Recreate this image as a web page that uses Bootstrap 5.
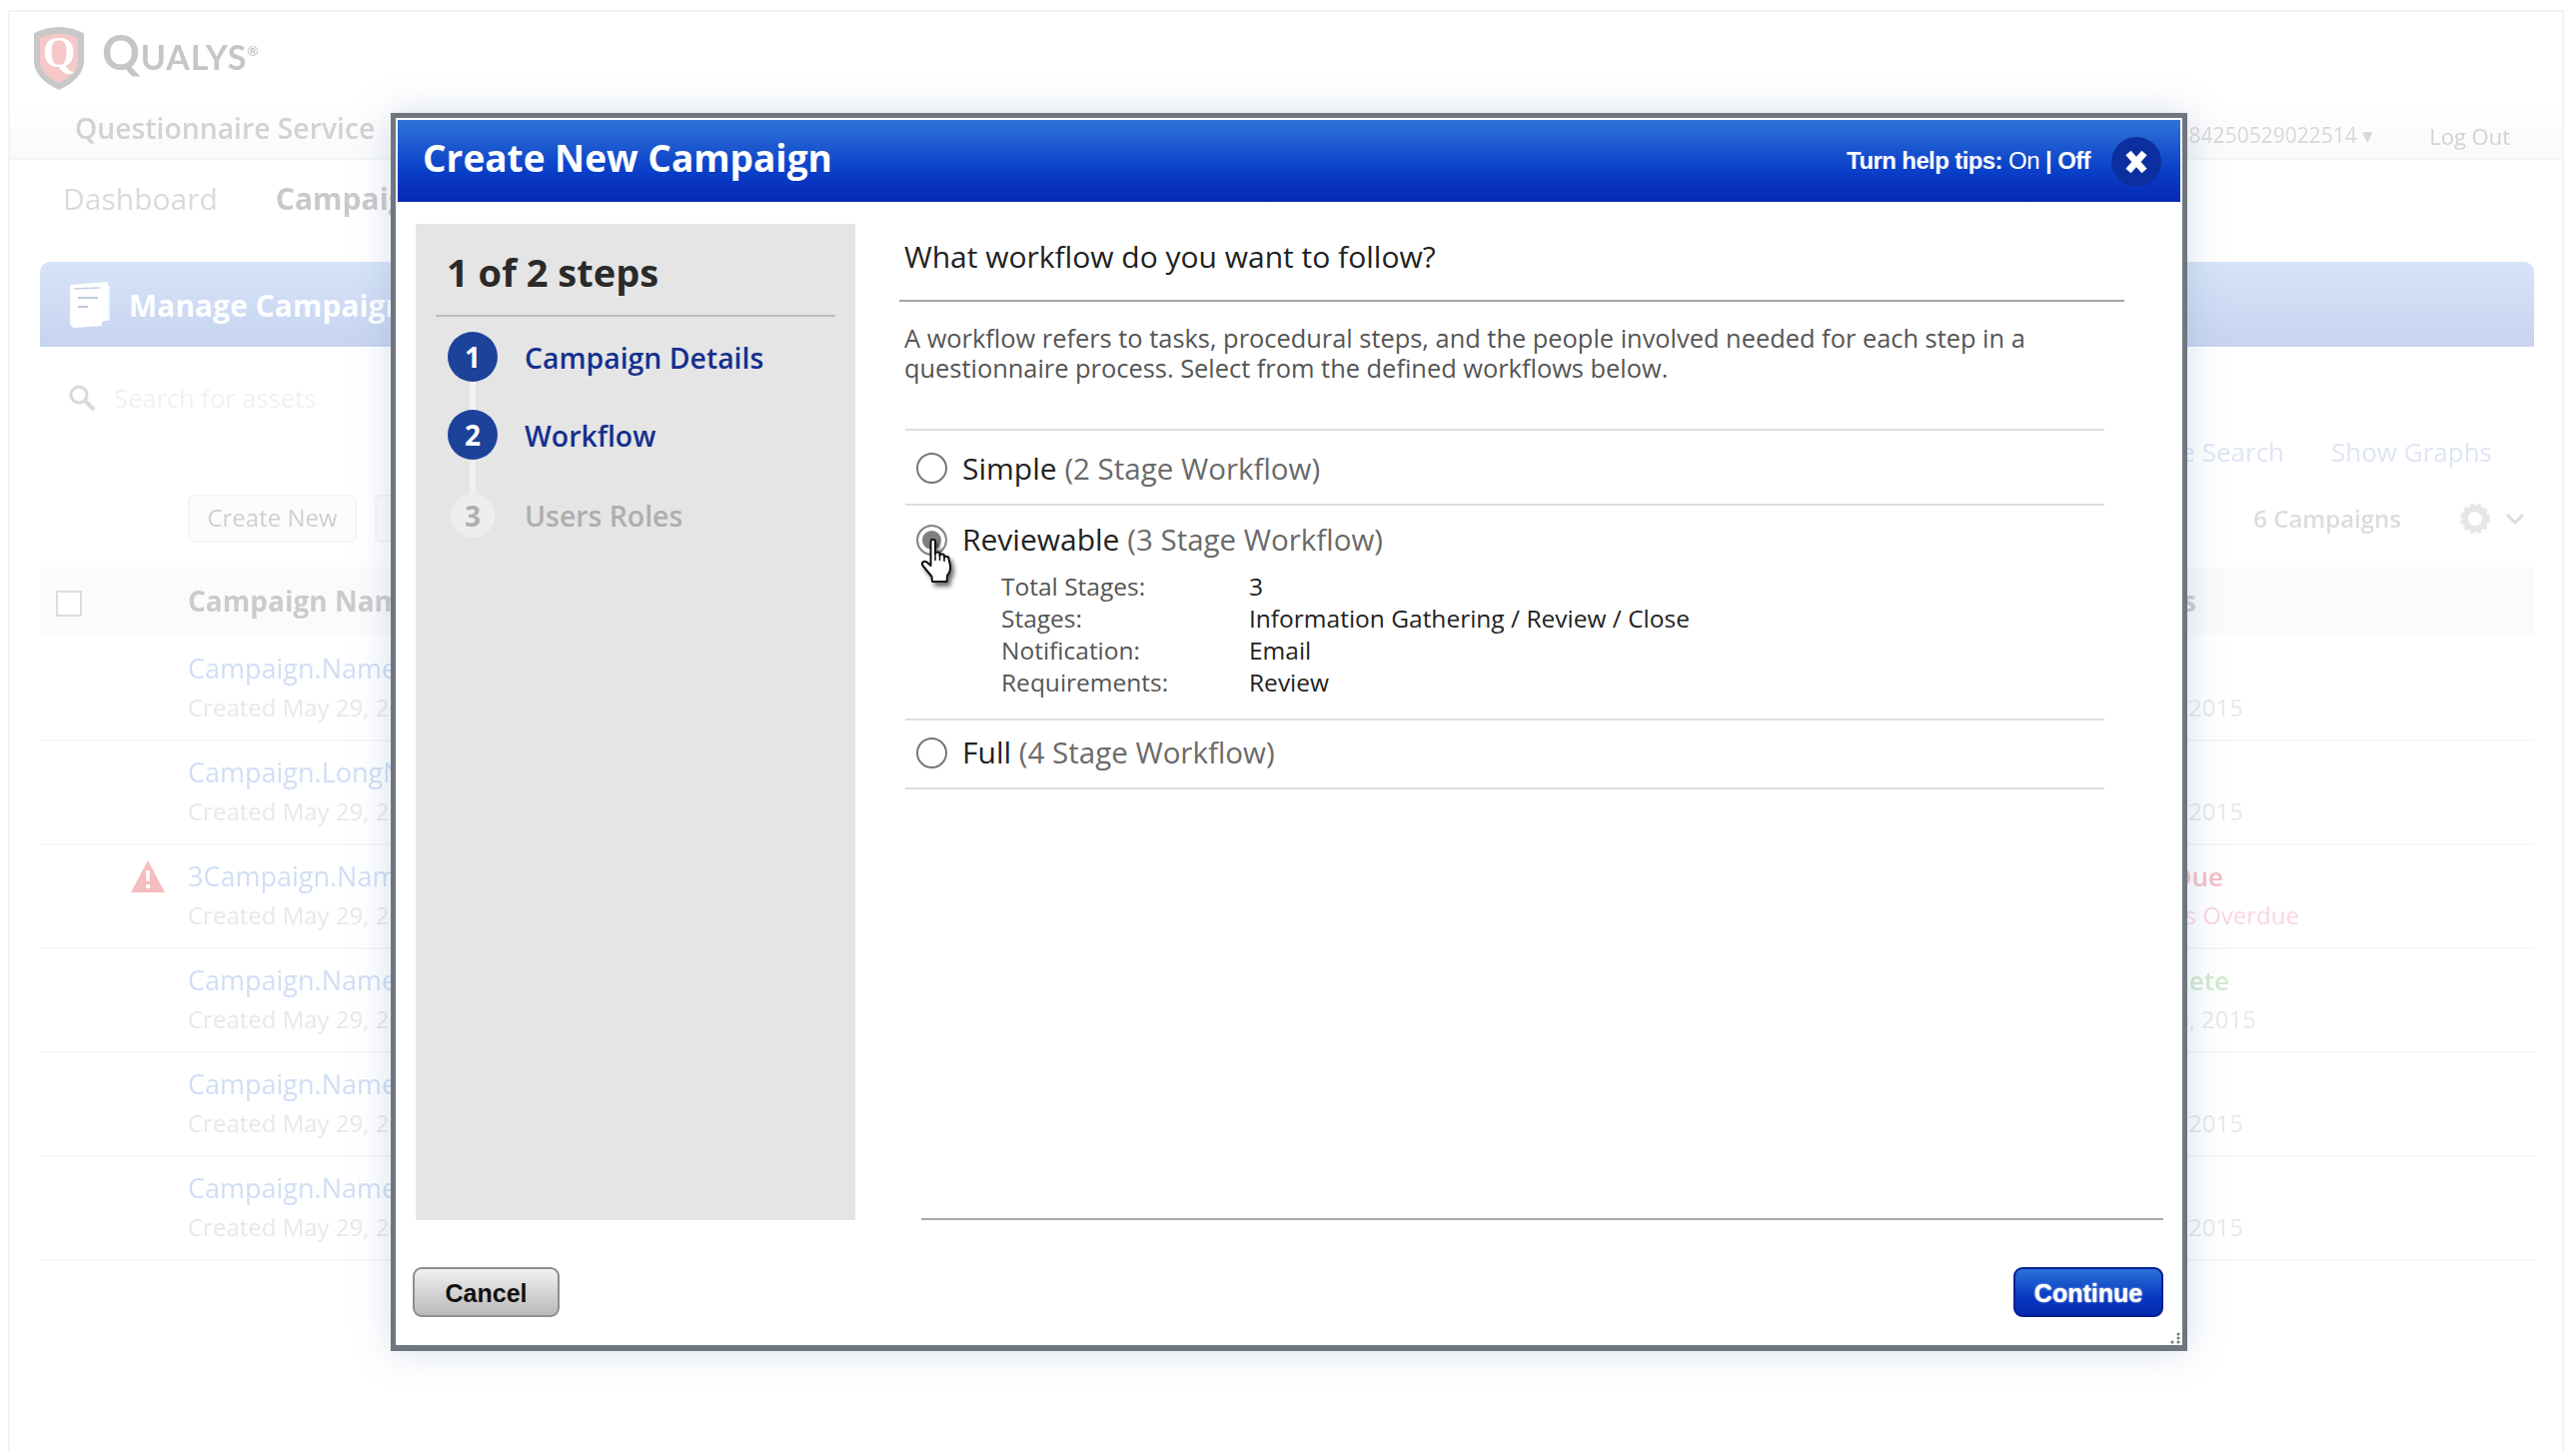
<!DOCTYPE html>
<html lang="en">
<head>
<meta charset="utf-8">
<title>Create New Campaign</title>
<link href="https://cdn.jsdelivr.net/npm/bootstrap@5.3.0/dist/css/bootstrap.min.css" rel="stylesheet">
<style>
html,body{height:1452px;overflow:hidden;background:#fff}
body{font-family:"Open Sans","Noto Sans",sans-serif;color:#222;position:relative}
/* dimmed application behind the dialog */
.qb-frame{margin:10px 12px 0 8px;height:1442px;border:2px solid #f3f3f3;border-bottom:0;filter:blur(.6px)}
.qb-logo{height:88px;padding:13px 0 0 21px;gap:15px}
.qb-word{font-family:Lato,"Open Sans",sans-serif;font-weight:700;font-size:34px;line-height:52px;color:#c6c6c6;letter-spacing:.8px;margin-top:1px}
.qb-word b{font-weight:700;font-size:47px}
.qb-word sup{font-size:14px;top:-1em}
.qb-service{height:60px;background:linear-gradient(#fff,#fafafa);border-bottom:2px solid #f4f4f4;padding:0 52px 0 65px}
.qb-service-name{font-size:28.3px;font-weight:600;color:#d2d2d2;margin-top:-2px}
.qb-acct{font-size:21px;color:#d8d8d8;padding-top:14px}
.qb-logout{font-size:22px;color:#d2d2d2;padding-top:14px}
.qb-tabs{height:76px;padding-left:53px;gap:58px;font-size:30px;color:#dadada}
.qb-tabs b{color:#c9c9c9;font-weight:700}
.qb-panel{padding:26px 28px 0 30px}
.qb-banner{height:85px;border-radius:10px 10px 0 0;background:linear-gradient(#d6e4f8,#c7d4f0);padding-left:30px;gap:17px;color:#fff;font-size:30px;font-weight:700}
.qb-banner span{padding-top:2px}
.qb-search{height:60px;margin-top:21px;padding-left:28px;gap:18px;font-size:25.5px;color:#f1f1f1}
.qb-links{height:40px;margin-top:4px;padding-right:42px;gap:47px;font-size:26px;color:#dfe4f6}
.qb-tools{height:48px;margin-top:23px;padding-left:148px;gap:18px}
.qb-tool{height:48px;border:2px solid #f5f5f5;border-radius:6px;background:#fcfcfc;color:#cfcfcf;font-size:24px;line-height:42px;padding:0;width:169px;text-align:center;white-space:nowrap}
.qb-tool-b{width:60px}
.qb-count{font-size:24px;font-weight:600;color:#dcdcdc;padding-right:9px;gap:59px}
.qb-head{height:68px;margin:24px 0 3px;background:#fbfbfb;font-size:28px;font-weight:700;color:#cbcbcb}
.qb-check{width:26px;height:26px;margin:5px 106px 0 16px;border:2px solid #dcdcdc;background:#fff}
.qb-row{height:104px;border-bottom:2px solid #f6f6f6}
.qb-slot{width:148px;flex:none;padding:14px 0 0 90px}
.qb-name{flex:1;min-width:0;white-space:nowrap;overflow:hidden;padding-top:14px}
.qb-name a,.qb-name span{display:block}
.qb-link{font-size:27px;line-height:34px;color:#cfdef6;text-decoration:none}
.qb-date{font-size:24px;line-height:34px;margin-top:5px;color:#e8e8e8}
.qb-state{width:600px;flex:none;text-align:right;padding-top:14px;white-space:nowrap}
.qb-state-top{font-size:26px;line-height:34px;font-weight:600;height:34px}
.qb-state-sub{font-size:24px;line-height:34px;margin-top:5px;color:#e8e8e8}
.qb-m291{margin-right:291px}
.qb-due{color:#f6bcc6;margin-right:311px}
.qb-over{color:#fbd6dd;margin-right:235px}
.qb-done{color:#d2eacd;margin-right:305px}
.qb-doned{margin-right:278px}
.qb-hstate{text-align:right;flex:1;padding-right:338px}
/* dialog */
.qm-box{position:absolute;left:391px;top:113px;width:1798px;height:1239px;border:solid #6e7680;border-width:5px 5px 6px 5px;padding:2px;background:#fff;box-shadow:0 0 36px rgba(120,150,190,.3)}
.qm-head{height:82px;background:linear-gradient(#2f74d6,#0a3fc8 62%,#0528b4);color:#fff;padding:0 19px 0 25px}
.qm-title{font-size:37px;font-weight:700;line-height:1;margin-top:-8px}
.qm-help{font-family:"Liberation Sans",Arial,sans-serif;font-weight:700;font-size:24px;letter-spacing:-.6px;gap:6px}
.qm-help span{font-weight:400}
.qm-close{width:50px;height:50px;border-radius:50%;background:#0c2f9f;border:0;padding:0;margin:2px 0 0 21px}
.qm-body{margin-top:22px;padding-left:18px;height:997px}
.qm-side{width:440px;flex:none;background:#e5e5e5;padding:0 20px 0 20px}
.qm-count{height:93px;border-bottom:2px solid #bcbcbc;padding:4px 0 0 11px;font-size:38px;font-weight:700;line-height:1;color:#2a2a2a}
.qm-steps{padding:15px 0 0 12px}
.qm-step{gap:27px;height:50px;font-size:28.4px;font-weight:600;color:#14308f}
.qm-step>span:last-child{padding-top:3px}
.qm-dot{width:50px;height:50px;border-radius:50%;background:#1d429a;color:#fff;font-weight:700;font-size:28px;flex:none}
.qm-link{width:6px;height:28px;margin-left:22px;background:#f3f3f3}
.qm-link-long{height:34px;opacity:.75}
.qm-step-off{color:#aeaeae;height:44px;gap:30px;margin-left:3px}
.qm-step-off>span:last-child{padding-top:0}
.qm-step-off .qm-dot{width:44px;height:44px;background:#eeeeee;color:#aeaeae}
.qm-main{flex:1;min-width:0;margin-left:44px;margin-right:17px}
.qm-q{font-size:30px;line-height:40px;padding:13px 0 0 5px;color:#222}
.qm-rule{height:2px;margin:23px 39px 0 0;background:#a4a4a4}
.qm-para{font-size:25.4px;line-height:30px;margin:21px 0 0 5px;color:#555}
.qm-opts{margin:46px 59px 0 6px;border-top:2px solid #dedede}
.qm-opt{border-bottom:2px solid #dedede}
.qm-line{gap:15px;height:73px;padding:2px 0 0 11px;font-size:30px;color:#222;margin:0}
.qm-line-open{height:65px;padding-top:3px}
.qm-opt-last .qm-line{height:67px;padding:0 0 3px 11px}
.qm-line small{font-size:29.5px;color:#6a6a6a}
.qm-radio{width:31px;height:31px;margin:0;flex:none;border:2px solid #777;background:#fff;box-shadow:none}
.qm-radio:checked{background:#808080;border:2px solid #888;box-shadow:inset 0 0 0 4px #fff;background-image:none}
.qm-detail{padding:0 0 20px 96px;font-size:24.5px;line-height:32px}
.qm-detail-row{display:flex}
.qm-detail-k{width:248px;color:#555}
.qm-detail-v{color:#222}
.qm-bottom{height:2px;margin:auto 0 0 22px;background:#a8a8a8}
.qm-foot{margin-top:47px;padding:0 17px 0 15px}
.qm-btn{height:50px;border-radius:9px;font-family:"Liberation Sans",Arial,sans-serif;font-weight:700;font-size:25px;padding:2px 0 0;line-height:1}
.qm-cancel{width:147px;color:#111;border:2px solid #8e8e8e;background:linear-gradient(#f1f1f1,#b9b9b9)}
.qm-continue{width:150px;color:#fff;border:2px solid #04208f;background:linear-gradient(#2b72d8,#0536c0 65%,#0429ad);text-shadow:0 0 2px #fff}
.qm-hand{position:absolute;left:524px;top:421px;width:36px;height:46px;filter:drop-shadow(3px 4px 2px rgba(0,0,0,.55))}
.qm-grip{position:absolute;right:1px;bottom:1px}
</style>
</head>
<body>
<div class="qb-frame">
  <div class="qb-logo d-flex align-items-start">
    <svg width="56" height="66" viewBox="0 0 56 64" preserveAspectRatio="none" aria-hidden="true"><path d="M3 8 Q28 -4 53 8 V36 Q52 52 28 63 Q4 52 3 36Z" fill="#c8c8c8"/><path d="M9 13 Q28 4 47 13 V36 Q46 48 28 56 Q10 48 9 36Z" fill="#f6c8c8"/><text x="28" y="41" text-anchor="middle" font-family="Liberation Serif,serif" font-weight="700" font-size="42" fill="#fff">Q</text></svg>
    <div class="qb-word"><b>Q</b>UALYS<sup>®</sup></div>
  </div>
  <div class="qb-service d-flex align-items-center justify-content-between">
    <div class="qb-service-name">Questionnaire Service</div>
    <div class="d-flex align-items-center" style="gap:56px"><span class="qb-acct">84250529022514 ▾</span><span class="qb-logout">Log Out</span></div>
  </div>
  <div class="qb-tabs d-flex align-items-center"><span>Dashboard</span><b>Campaigns</b></div>
  <div class="qb-panel">
    <div class="qb-banner d-flex align-items-center">
      <svg width="42" height="46" viewBox="0 0 42 46" aria-hidden="true"><path d="M0 3 L38 0 V38 L32 40 V44 L4 46 Q0 44 0 40Z" fill="#fff"/><path d="M34 4 H40 V39 H34Z" fill="#fff" opacity=".7"/><path d="M4 7 L30 6" stroke="#c5cfe6" stroke-width="1.5"/><path d="M8 16 H28 M8 25 H18" stroke="#bcc8e2" stroke-width="2"/></svg>
      <span>Manage Campaigns</span>
    </div>
    <div class="qb-search d-flex align-items-center">
      <svg width="28" height="28" viewBox="0 0 28 28" aria-hidden="true"><circle cx="11" cy="11" r="8" fill="none" stroke="#d9d9d9" stroke-width="3"/><path d="M17 17 L26 26" stroke="#d9d9d9" stroke-width="4"/></svg>
      <span>Search for assets</span>
    </div>
    <div class="qb-links d-flex align-items-center justify-content-end"><span>Save Search</span><span>Show Graphs</span></div>
    <div class="qb-tools d-flex align-items-center">
      <div class="qb-tool">Create New</div>
      <div class="qb-tool qb-tool-b"></div>
      <div class="qb-count ms-auto d-flex align-items-center"><span>6 Campaigns</span>
        <span class="d-flex align-items-center" style="gap:15px">
          <svg width="30" height="30" viewBox="0 0 30 30" aria-hidden="true"><circle cx="15" cy="15" r="10" fill="none" stroke="#e6e6e6" stroke-width="6"/><circle cx="15" cy="15" r="13" fill="none" stroke="#e6e6e6" stroke-width="4" stroke-dasharray="4 3"/></svg>
          <svg width="20" height="14" viewBox="0 0 20 14" aria-hidden="true"><path d="M2 3 L10 11 L18 3" fill="none" stroke="#dcdcdc" stroke-width="3"/></svg>
        </span>
      </div>
    </div>
    <div class="qb-head d-flex align-items-center"><div class="qb-check flex-none"></div><span>Campaign Name</span><span class="qb-hstate">Status</span></div>

    <div class="qb-row d-flex"><div class="qb-slot"></div><div class="qb-name"><a class="qb-link">Campaign.Name</a><span class="qb-date">Created May 29, 2015</span></div><div class="qb-state"><div class="qb-state-top"></div><div class="qb-state-sub qb-m291">May 29, 2015</div></div></div>
    <div class="qb-row d-flex"><div class="qb-slot"></div><div class="qb-name"><a class="qb-link">Campaign.LongName</a><span class="qb-date">Created May 29, 2015</span></div><div class="qb-state"><div class="qb-state-top"></div><div class="qb-state-sub qb-m291">May 29, 2015</div></div></div>
    <div class="qb-row d-flex"><div class="qb-slot"><svg width="36" height="34" viewBox="0 0 36 34" aria-hidden="true"><path d="M18 1 L35 33 H1Z" fill="#f5bdbd"/><path d="M16 11 H20 L19.5 22 H16.5Z M16 25 H20 V29 H16Z" fill="#fff"/></svg></div><div class="qb-name"><a class="qb-link">3Campaign.Name</a><span class="qb-date">Created May 29, 2015</span></div><div class="qb-state"><div class="qb-state-top qb-due">Due</div><div class="qb-state-sub qb-over">2 Days Overdue</div></div></div>
    <div class="qb-row d-flex"><div class="qb-slot"></div><div class="qb-name"><a class="qb-link">Campaign.Name</a><span class="qb-date">Created May 29, 2015</span></div><div class="qb-state"><div class="qb-state-top qb-done">Complete</div><div class="qb-state-sub qb-doned">May 29, 2015</div></div></div>
    <div class="qb-row d-flex"><div class="qb-slot"></div><div class="qb-name"><a class="qb-link">Campaign.Name</a><span class="qb-date">Created May 29, 2015</span></div><div class="qb-state"><div class="qb-state-top"></div><div class="qb-state-sub qb-m291">May 29, 2015</div></div></div>
    <div class="qb-row d-flex"><div class="qb-slot"></div><div class="qb-name"><a class="qb-link">Campaign.Name</a><span class="qb-date">Created May 29, 2015</span></div><div class="qb-state"><div class="qb-state-top"></div><div class="qb-state-sub qb-m291">May 29, 2015</div></div></div>
  </div>
</div>

<div class="qm-box d-flex flex-column" role="dialog" aria-label="Create New Campaign">
  <div class="qm-head d-flex align-items-center justify-content-between">
    <div class="qm-title">Create New Campaign</div>
    <div class="d-flex align-items-center">
      <div class="qm-help d-flex"><div>Turn help tips: <span>On</span> | Off</div></div>
      <button class="qm-close d-flex align-items-center justify-content-center" aria-label="Close"><svg width="24" height="24" viewBox="0 0 24 24"><path d="M4 3 L20 21 M20 3 L4 21" stroke="#fff" stroke-width="7"/></svg></button>
    </div>
  </div>
  <div class="qm-body d-flex">
    <div class="qm-side">
      <div class="qm-count d-flex align-items-center">1 of 2 steps</div>
      <div class="qm-steps">
        <div class="qm-step d-flex align-items-center"><span class="qm-dot d-flex align-items-center justify-content-center">1</span><span>Campaign Details</span></div>
        <div class="qm-link"></div>
        <div class="qm-step d-flex align-items-center"><span class="qm-dot d-flex align-items-center justify-content-center">2</span><span>Workflow</span></div>
        <div class="qm-link qm-link-long"></div>
        <div class="qm-step qm-step-off d-flex align-items-center"><span class="qm-dot d-flex align-items-center justify-content-center">3</span><span>Users Roles</span></div>
      </div>
    </div>
    <div class="qm-main d-flex flex-column">
      <div class="qm-q">What workflow do you want to follow?</div>
      <div class="qm-rule"></div>
      <p class="qm-para mb-0">A workflow refers to tasks, procedural steps, and the people involved needed for each step in a<br>questionnaire process. Select from the defined workflows below.</p>
      <div class="qm-opts">
        <div class="qm-opt">
          <label class="qm-line d-flex align-items-center"><input class="form-check-input qm-radio" type="radio" name="wf"><span>Simple <small>(2 Stage Workflow)</small></span></label>
        </div>
        <div class="qm-opt">
          <label class="qm-line qm-line-open d-flex align-items-center"><input class="form-check-input qm-radio" type="radio" name="wf" checked><span>Reviewable <small>(3 Stage Workflow)</small></span></label>
          <div class="qm-detail">
            <div class="qm-detail-row"><span class="qm-detail-k">Total Stages:</span><span class="qm-detail-v">3</span></div>
            <div class="qm-detail-row"><span class="qm-detail-k">Stages:</span><span class="qm-detail-v">Information Gathering / Review / Close</span></div>
            <div class="qm-detail-row"><span class="qm-detail-k">Notification:</span><span class="qm-detail-v">Email</span></div>
            <div class="qm-detail-row"><span class="qm-detail-k">Requirements:</span><span class="qm-detail-v">Review</span></div>
          </div>
        </div>
        <div class="qm-opt qm-opt-last">
          <label class="qm-line d-flex align-items-center"><input class="form-check-input qm-radio" type="radio" name="wf"><span>Full <small>(4 Stage Workflow)</small></span></label>
        </div>
      </div>
      <div class="qm-bottom"></div>
    </div>
  </div>
  <div class="qm-foot d-flex justify-content-between">
    <button class="btn qm-btn qm-cancel">Cancel</button>
    <button class="btn qm-btn qm-continue">Continue</button>
  </div>
  <svg class="qm-hand" viewBox="0 0 36 46" aria-hidden="true"><path d="M11.5 3 C11.5 0 16 0 16 3 V15 C16.5 13 20.5 13 20.5 15.5 V17 C21 15 25 15 25 17.5 V19 C25.5 17 29.5 17.5 29.5 20 L31 27 C31.5 32 30 35 28 37 L27.5 43 H13 L12.5 38 L3.5 27 C1.5 24 5 21.5 7.5 23.5 L11.5 27 Z" fill="#fff" stroke="#111" stroke-width="2" stroke-linejoin="round"/><path d="M16 15 V22 M20.5 16 V22 M25 18 V23" stroke="#111" stroke-width="1.5"/></svg>
  <svg class="qm-grip" width="12" height="12" viewBox="0 0 12 12" aria-hidden="true"><g fill="#777"><circle cx="9" cy="2" r="1.5"/><circle cx="9" cy="6" r="1.5"/><circle cx="9" cy="10" r="1.5"/><circle cx="3" cy="10" r="1.5"/></g></svg>
</div>
<script src="https://cdn.jsdelivr.net/npm/bootstrap@5.3.0/dist/js/bootstrap.bundle.min.js"></script>
</body>
</html>
